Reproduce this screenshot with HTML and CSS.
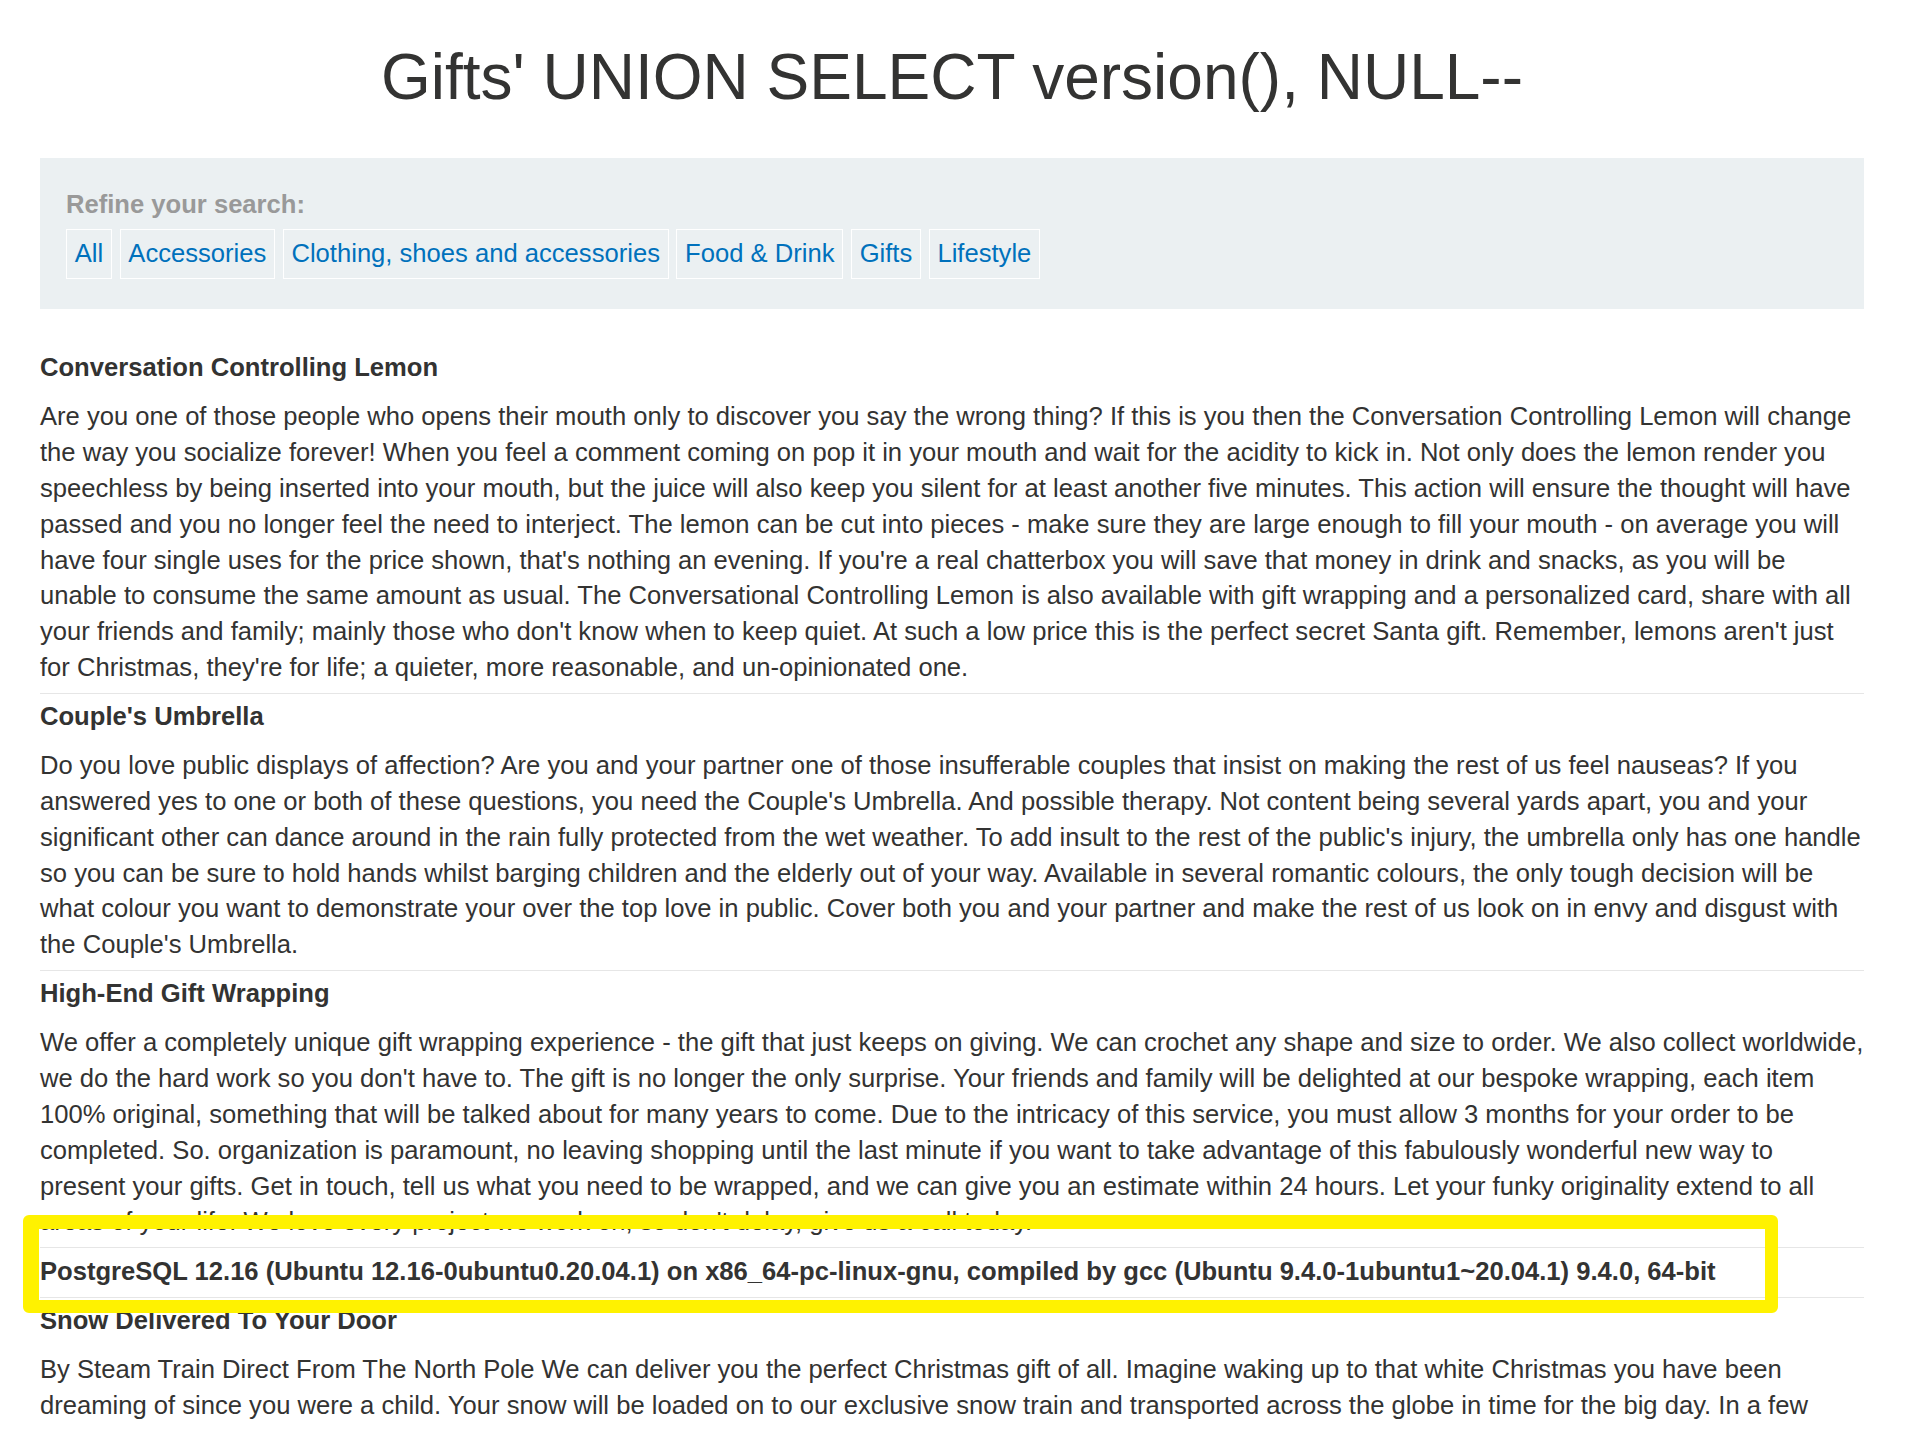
FILE: index.html
```html
<!DOCTYPE html>
<html lang="en">
<head>
<meta charset="utf-8">
<title>Gifts' UNION SELECT version(), NULL--</title>
<link rel="stylesheet" href="styles.css">
</head>
<body>
<div class="page">
  <h1 class="title">Gifts' UNION SELECT version(), NULL--</h1>

  <section class="filters">
    <div class="filters-label">Refine your search:</div>
    <div class="filters-list">
      <a class="filter-btn" href="#">All</a>
      <a class="filter-btn" href="#">Accessories</a>
      <a class="filter-btn" href="#">Clothing, shoes and accessories</a>
      <a class="filter-btn" href="#">Food &amp; Drink</a>
      <a class="filter-btn" href="#">Gifts</a>
      <a class="filter-btn" href="#">Lifestyle</a>
    </div>
  </section>

  <div class="products">
    <div class="product">
      <div class="product-name">Conversation Controlling Lemon</div>
      <div class="product-desc">Are you one of those people who opens their mouth only to discover you say the wrong thing? If this is you then the Conversation Controlling Lemon will change the way you socialize forever! When you feel a comment coming on pop it in your mouth and wait for the acidity to kick in. Not only does the lemon render you speechless by being inserted into your mouth, but the juice will also keep you silent for at least another five minutes. This action will ensure the thought will have passed and you no longer feel the need to interject. The lemon can be cut into pieces - make sure they are large enough to fill your mouth - on average you will have four single uses for the price shown, that's nothing an evening. If you're a real chatterbox you will save that money in drink and snacks, as you will be unable to consume the same amount as usual. The Conversational Controlling Lemon is also available with gift wrapping and a personalized card, share with all your friends and family; mainly those who don't know when to keep quiet. At such a low price this is the perfect secret Santa gift. Remember, lemons aren't just for Christmas, they're for life; a quieter, more reasonable, and un-opinionated one.</div>
    </div>
    <div class="product">
      <div class="product-name">Couple's Umbrella</div>
      <div class="product-desc">Do you love public displays of affection? Are you and your partner one of those insufferable couples that insist on making the rest of us feel nauseas? If you answered yes to one or both of these questions, you need the Couple's Umbrella. And possible therapy. Not content being several yards apart, you and your significant other can dance around in the rain fully protected from the wet weather. To add insult to the rest of the public's injury, the umbrella only has one handle so you can be sure to hold hands whilst barging children and the elderly out of your way. Available in several romantic colours, the only tough decision will be what colour you want to demonstrate your over the top love in public. Cover both you and your partner and make the rest of us look on in envy and disgust with the Couple's Umbrella.</div>
    </div>
    <div class="product">
      <div class="product-name">High-End Gift Wrapping</div>
      <div class="product-desc">We offer a completely unique gift wrapping experience - the gift that just keeps on giving. We can crochet any shape and size to order. We also collect worldwide, we do the hard work so you don't have to. The gift is no longer the only surprise. Your friends and family will be delighted at our bespoke wrapping, each item 100% original, something that will be talked about for many years to come. Due to the intricacy of this service, you must allow 3 months for your order to be completed. So. organization is paramount, no leaving shopping until the last minute if you want to take advantage of this fabulously wonderful new way to present your gifts. Get in touch, tell us what you need to be wrapped, and we can give you an estimate within 24 hours. Let your funky originality extend to all areas of your life. We love every project we work on, so don't delay, give us a call today.</div>
    </div>
    <div class="product product-empty">
      <div class="product-name">PostgreSQL 12.16 (Ubuntu 12.16-0ubuntu0.20.04.1) on x86_64-pc-linux-gnu, compiled by gcc (Ubuntu 9.4.0-1ubuntu1~20.04.1) 9.4.0, 64-bit</div>
      <div class="product-desc"></div>
    </div>
    <div class="product">
      <div class="product-name">Snow Delivered To Your Door</div>
      <div class="product-desc">By Steam Train Direct From The North Pole We can deliver you the perfect Christmas gift of all. Imagine waking up to that white Christmas you have been dreaming of since you were a child. Your snow will be loaded on to our exclusive snow train and transported across the globe in time for the big day. In a few simple steps, your snow will be ready to scatter in the areas of your choosing. *Make sure you have an extra large freezer before delivery. *Decant the liquid into small plastic tubs (there is some loss of molecular structure during transit). *Allow 3 days for it to refreeze.*Chip away at each block until the ice resembles snowflakes. *Scatter snow. Yes! It really is that easy. You will be the envy of all your neighbors unless you let them in on the secret.</div>
    </div>
  </div>

  <div class="highlight" aria-hidden="true"></div>
</div>
</body>
</html>
```

FILE: styles.css
```css
html, body {
  margin: 0;
  padding: 0;
  background: #ffffff;
  overflow: hidden;
}

body {
  font-family: "Liberation Sans", Arial, Helvetica, sans-serif;
  font-size: 25.6px;
  line-height: 35.84px;
  color: #333332;
}

.page {
  position: relative;
  width: 1824px;
  margin-left: 40px;
  padding-top: 40.8px;
}

.title {
  margin: 0 0 45.2px;
  font-size: 64px;
  line-height: 72px;
  font-weight: normal;
  text-align: center;
  color: #333332;
}

.filters {
  background: #ebf0f2;
  padding: 29px 26px 30px;
}

.filters-label {
  font-weight: bold;
  color: #999999;
}

.filters-list {
  display: flex;
  flex-wrap: wrap;
  gap: 7.8px;
  margin-top: 6px;
}

.filter-btn {
  display: block;
  padding: 6.08px 7.7px;
  border: 1px solid #ffffff;
  color: #0071bc;
  text-decoration: none;
}

.products {
  margin-top: 36.4px;
}

.product {
  border-bottom: 1px solid #e6e6e6;
  padding-bottom: 7px;
}

.product-name {
  font-weight: bold;
  padding: 5px 0 13.2px;
}

.product-desc {
  margin-right: -1px;
}

.product-empty .product-name {
  padding: 6px 0 0;
}

.highlight {
  position: absolute;
  left: -16.7px;
  top: 1215px;
  width: 1754.4px;
  height: 98.3px;
  box-sizing: border-box;
  border-style: solid;
  border-color: #fff200;
  border-width: 14px 13px 13px 16px;
  border-radius: 6px;
}
```
